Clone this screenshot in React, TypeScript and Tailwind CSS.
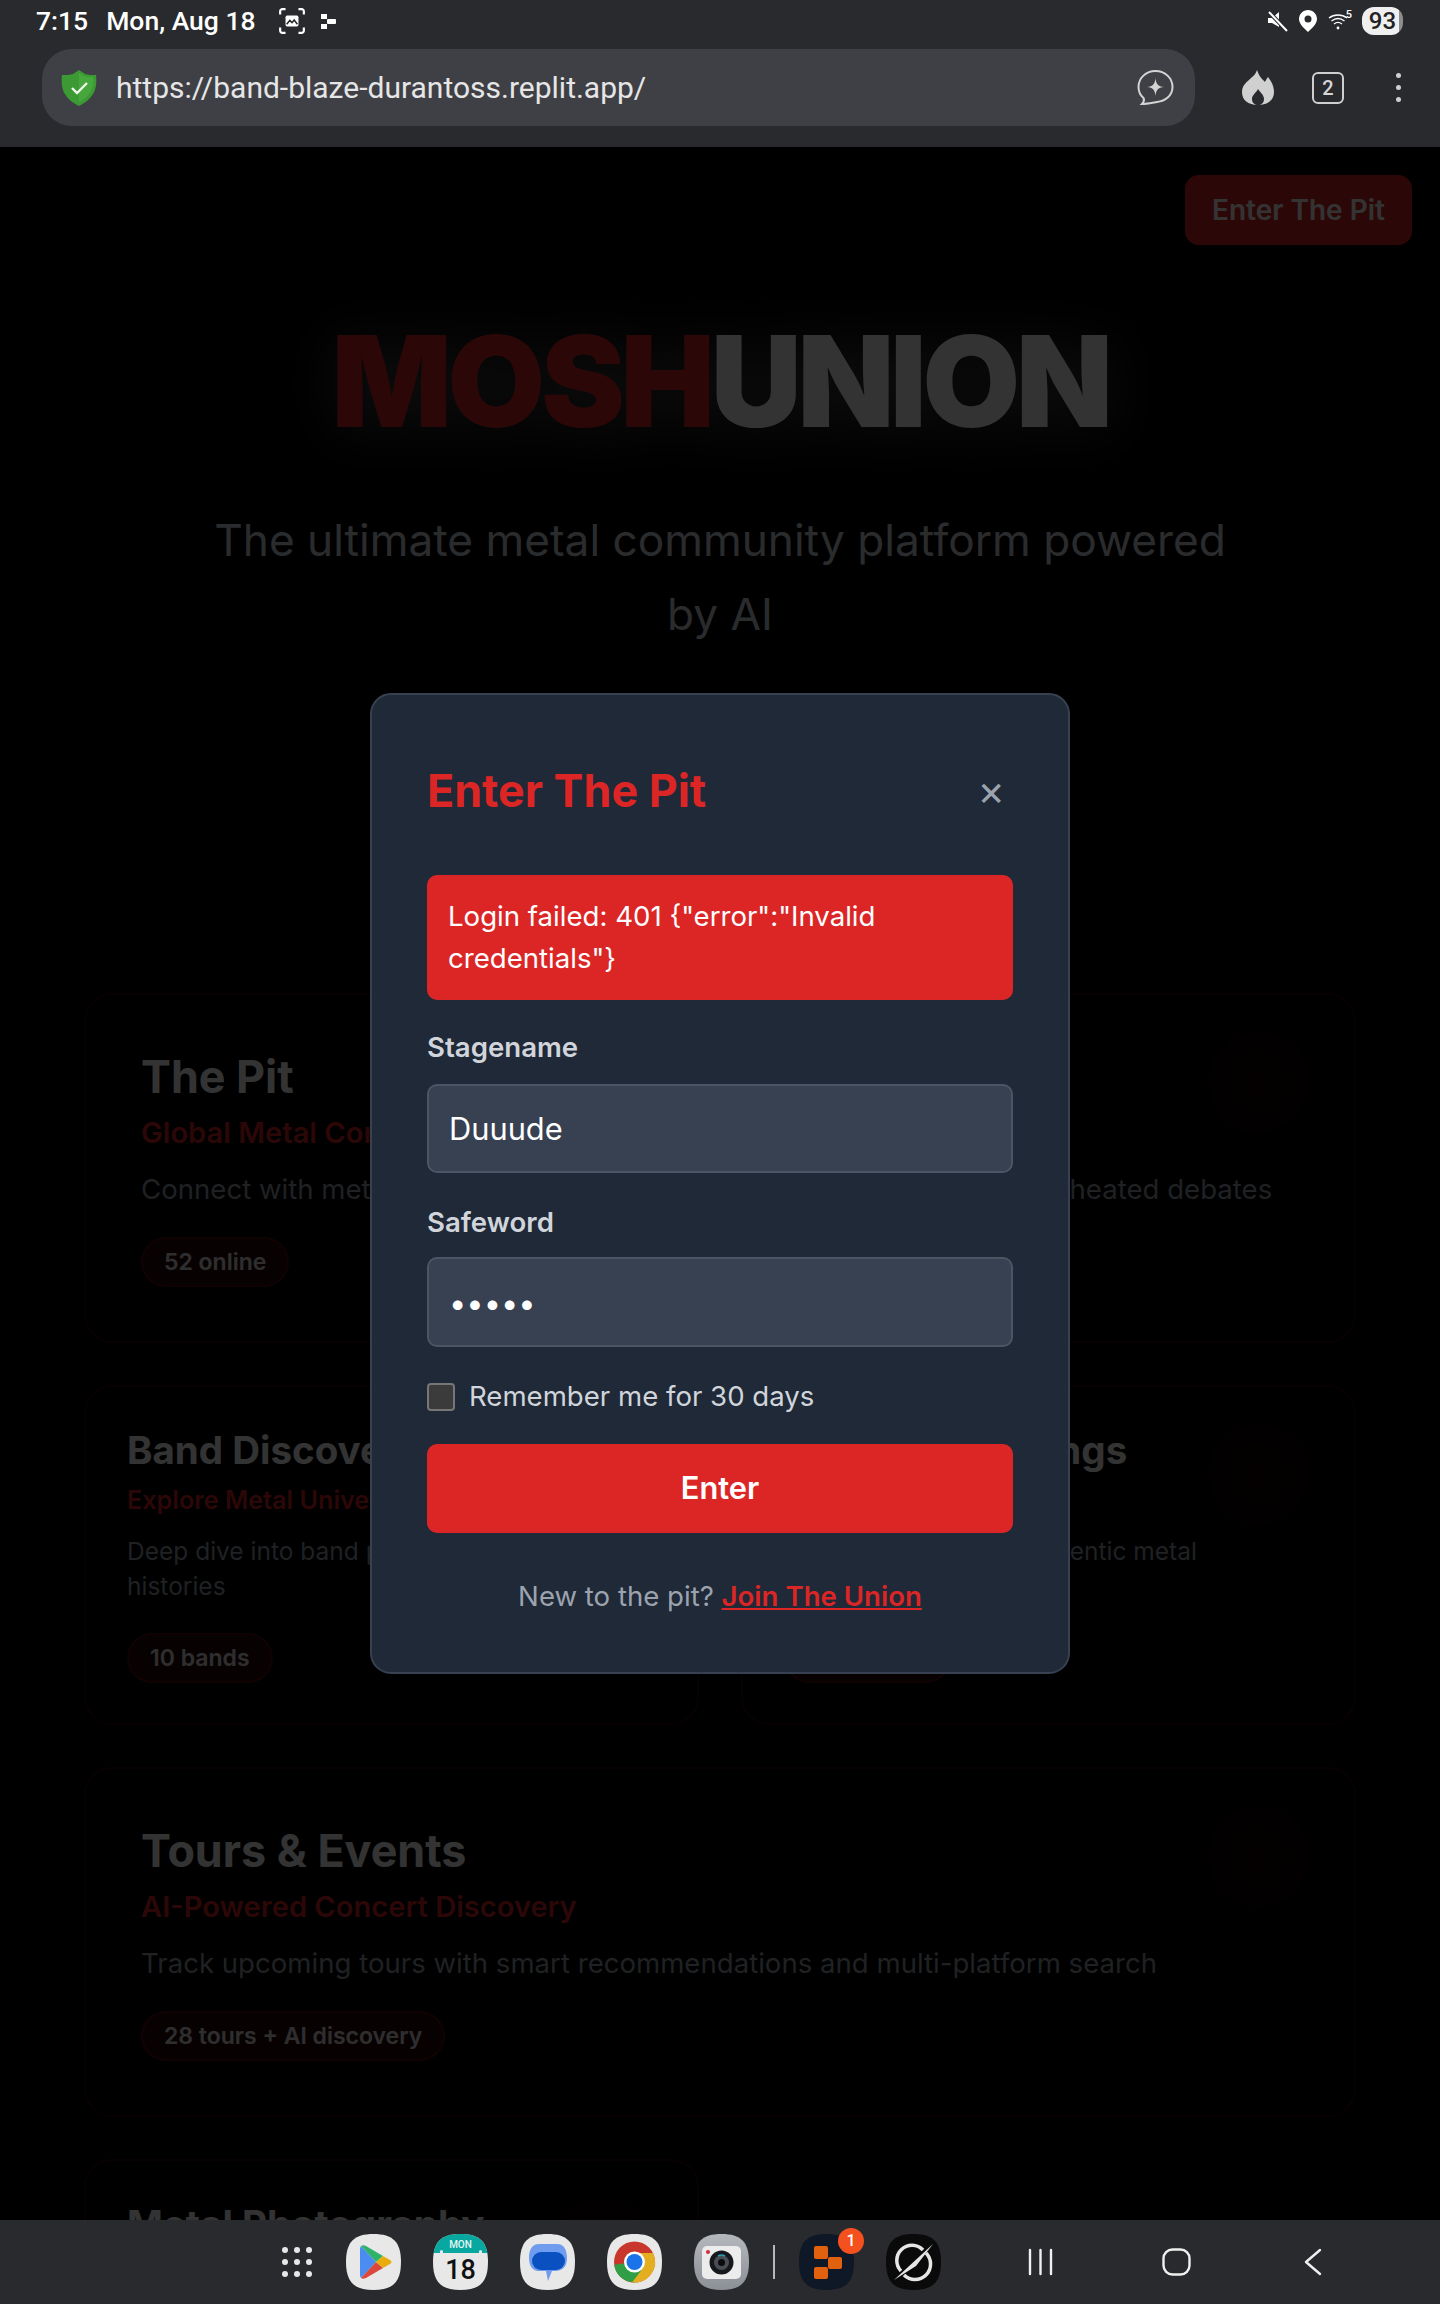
import { CSSProperties, ReactNode } from "react";

const inter = { fontFamily: "Inter, sans-serif" } as CSSProperties;

const SQUIRCLE = "M27.5 0C47 0 55 8 55 28C55 48 47 56 27.5 56C8 56 0 48 0 28C0 8 8 0 27.5 0Z";

function Squircle({ id, fill, children }: { id: string; fill: string; children?: ReactNode }) {
  return (
    <svg width="55" height="56" viewBox="0 0 55 56">
      <defs>
        <clipPath id={id}>
          <path d={SQUIRCLE} />
        </clipPath>
      </defs>
      <g clipPath={`url(#${id})`}>
        <rect width="55" height="56" fill={fill} />
        {children}
      </g>
    </svg>
  );
}

function PlayIcon() {
  return (
    <Squircle id="sq-play" fill="#e8e8e8">
      <path d="M15 12L30 28L15 44C14 43 14 41 14 40V16C14 15 14 13 15 12Z" fill="#4a8cf0" />
      <path d="M15 12C16 11 18 11 20 12L37 22L30 28Z" fill="#2fb36b" />
      <path d="M15 44C16 45 18 45 20 44L37 34L30 28Z" fill="#d9483b" />
      <path d="M37 22L44 26C46 27 46 29 44 30L37 34L30 28Z" fill="#e8ad0c" />
    </Squircle>
  );
}

function CalendarIcon() {
  return (
    <Squircle id="sq-cal" fill="#e8e8e8">
      <rect width="55" height="19" fill="#08a8a0" />
      <rect x="7" y="16" width="3" height="6" rx="1.5" fill="#e8e8e8" />
      <rect x="46" y="16" width="3" height="6" rx="1.5" fill="#e8e8e8" />
      <text x="27.5" y="14" textAnchor="middle" fontFamily="Roboto, sans-serif" fontSize="10" fontWeight="500" fill="#e6f6f5">MON</text>
      <text x="27.5" y="45" textAnchor="middle" fontFamily="Roboto, sans-serif" fontSize="27" fontWeight="500" fill="#111">18</text>
    </Squircle>
  );
}

function MessagesIcon() {
  return (
    <Squircle id="sq-msg" fill="#e8e8e8">
      <path d="M19 10H37C44 10 47 16 47 24C47 32 43 37 35 37H32L28 47L26 37H19C12 37 9 31 9 24C9 16 12 10 19 10Z" fill="#6f9cee" />
      <rect x="12" y="18" width="33" height="18" rx="9" fill="#0a50c0" />
    </Squircle>
  );
}

function ChromeIcon() {
  return (
    <Squircle id="sq-chrome" fill="#e8e8e8">
      <circle cx="27.5" cy="28" r="20.5" fill="#c9372c" />
      <path d="M27.5 28L7 28A20.5 20.5 0 0 0 25 48.4L36 34Z" fill="#2f9e44" transform="rotate(-8 27.5 28)" />
      <path d="M27.5 19H46A20.5 20.5 0 0 1 25 48.4L36 34Z" fill="#e3ae1f" />
      <circle cx="27.5" cy="28" r="10.5" fill="#fff" />
      <circle cx="27.5" cy="28" r="8" fill="#1a73e8" />
    </Squircle>
  );
}

function CameraIcon() {
  return (
    <svg width="55" height="56" viewBox="0 0 55 56">
      <defs>
        <linearGradient id="cam" x1="0" y1="0" x2="0" y2="1">
          <stop offset="0" stopColor="#b5b9bd" />
          <stop offset="1" stopColor="#8b8f96" />
        </linearGradient>
      </defs>
      <path d={SQUIRCLE} fill="url(#cam)" />
      <rect x="8" y="12" width="39" height="33" rx="5" fill="#ececec" />
      <circle cx="14" cy="18" r="2" fill="#d22f3a" />
      <circle cx="27.5" cy="28.5" r="12" fill="#17181b" />
      <circle cx="27.5" cy="28.5" r="7.5" fill="#4a4d55" />
      <circle cx="27.5" cy="28.5" r="3.5" fill="#0b0b0d" />
      <path d="M24 22A7 7 0 0 1 31 22" stroke="#2f9bb0" strokeWidth="1.6" fill="none" />
    </svg>
  );
}

function TasksIcon() {
  return (
    <div className="relative w-[55px] h-[56px]">
      <svg width="55" height="56" viewBox="0 0 55 56">
        <path d={SQUIRCLE} fill="#0f1826" />
        <rect x="15" y="12" width="14" height="13" rx="2" fill="#e2610f" />
        <rect x="29" y="23" width="14" height="12" rx="2" fill="#e2610f" />
        <rect x="15" y="33" width="14" height="12" rx="2" fill="#e2610f" />
      </svg>
      <span
        className="absolute -top-[6px] -right-[10px] flex items-center justify-center w-[26px] h-[26px] rounded-full bg-[#f4511e] text-white text-[16px] font-medium"
        style={{ fontFamily: "Roboto, sans-serif" }}
      >
        1
      </span>
    </div>
  );
}

function SwirlIcon() {
  return (
    <svg width="55" height="56" viewBox="0 0 55 56">
      <path d={SQUIRCLE} fill="#0a0a0a" />
      <path d="M15 37A15 15 0 0 1 37 16" stroke="#e6e6e6" strokeWidth="3.5" fill="none" />
      <path d="M40 19A15 15 0 0 1 18 41" stroke="#e6e6e6" strokeWidth="3.5" fill="none" />
      <path d="M8 46L47 10L30 32Z" fill="#e6e6e6" />
    </svg>
  );
}

function StatusBar() {
  return (
    <div className="h-[40px] flex items-center justify-between pl-[36px] pr-[37px] pt-[2px]" style={{ fontFamily: "Roboto, sans-serif" }}>
      <div className="flex items-center text-white text-[26.500px] font-medium">
        <span>7:15</span>
        <span className="ml-[18px]">Mon, Aug 18</span>
        <svg className="ml-[22px]" width="28" height="28" viewBox="0 0 26 26" fill="none" stroke="#fff" strokeWidth="2">
          <path d="M2 7V4C2 3 3 2 4 2H7M19 2H22C23 2 24 3 24 4V7M24 19V22C24 23 23 24 22 24H19M7 24H4C3 24 2 23 2 22V19" />
          <rect x="7" y="8" width="12" height="10" rx="1.500" fill="#fff" stroke="none" />
          <path d="M8 16L11 12.500L13 14.500L15 12L18 16" stroke="#292a2d" strokeWidth="1.400" />
        </svg>
        <svg className="ml-[15px]" width="16" height="18" viewBox="0 0 16 18" fill="#fff">
          <rect x="0" y="2" width="6" height="5" />
          <rect x="6" y="7" width="9" height="5" rx="1" />
          <rect x="0" y="12" width="6" height="5" />
        </svg>
      </div>
      <div className="flex items-center">
        <svg width="22" height="22" viewBox="0 0 22 22" fill="#fff">
          <path d="M1 8H5L12 2V17L5 13H1Z" />
          <path d="M2 2L20 21" stroke="#292a2d" strokeWidth="4" />
          <path d="M2 2L20 21" stroke="#fff" strokeWidth="2" />
        </svg>
        <svg className="ml-[10px]" width="18" height="22" viewBox="0 0 18 22">
          <path d="M9 0C4 0 0 4 0 9C0 14 5 18 9 22C13 18 18 14 18 9C18 4 14 0 9 0Z" fill="#fff" />
          <circle cx="9" cy="9" r="3.500" fill="#292a2d" />
        </svg>
        <div className="relative ml-[11px] w-[24px] h-[22px]">
          <svg width="20" height="18" viewBox="0 0 20 18" fill="none" stroke="#fff" strokeWidth="1.400" className="absolute left-0 top-[3px]">
            <path d="M1 5C6 1 14 1 19 5M3.500 8C7.500 5 12.500 5 16.500 8M6 11C8.500 9 11.500 9 14 11" />
            <circle cx="10" cy="15" r="1.400" fill="#fff" stroke="none" />
          </svg>
          <span className="absolute right-0 -top-[3px] text-white text-[11px] font-medium">5</span>
        </div>
        <div className="ml-[10px] w-[41px] h-[28px] rounded-[12px] bg-[linear-gradient(90deg,#efefef_90%,#8d8d8d_90%)] flex items-center justify-center text-[#222] text-[24px] font-medium leading-none">
          93
        </div>
      </div>
    </div>
  );
}

function Toolbar() {
  return (
    <div className="flex items-center pl-[42px] mt-[9px]" style={{ fontFamily: "Roboto, sans-serif" }}>
      <div className="w-[1153px] h-[77px] rounded-[30px] bg-[#3f4045] flex items-center pl-[19px] pr-[21px]">
        <svg width="36" height="36" viewBox="0 0 36 36">
          <path d="M18 0L24 4C27 5 31 5 35 5C36 15 36 27 18 36C0 27 0 15 1 5C5 5 9 5 12 4Z" fill="#3b9a34" />
          <path d="M18 3L23 6C26 7 29 7 32 7C33 15 32 25 18 32Z" fill="#46a83c" />
          <path d="M11 18L16 23L26 13" stroke="#eef7ec" strokeWidth="2.400" fill="none" />
        </svg>
        <span className="ml-[19px] text-[30px] leading-none text-[#e6e6e6]">https://band-blaze-durantoss.replit.app/</span>
        <svg className="ml-auto" width="37" height="37" viewBox="0 0 37 37" fill="none">
          <path d="M5 35C7 33 7.500 31 6.500 29C3 26 1.500 22 1.500 18C1.500 9 9 2 18.500 2C28 2 35.500 9 35.500 18C35.500 27 28 32 20 33C14 34 9 35 5 35Z" stroke="#d4d4d4" strokeWidth="2" />
          <path d="M18.500 9C19 15 21 17.500 27 18C21 18.500 19 21 18.500 27C18 21 16 18.500 10 18C16 17.500 18 15 18.500 9Z" fill="#d4d4d4" />
        </svg>
      </div>
      <svg className="ml-[47px]" width="32" height="35" viewBox="0 0 32 35">
        <path d="M15 0C17 6 20 9 23 12C24 10 25 8 26 7C30 12 32 17 32 22C32 30 26 35 16 35C6 35 0 30 0 22C0 15 5 12 9 8C12 6 14 3 15 0Z" fill="#d0d0d0" />
        <path d="M16 19C18 22 22 25 22 29C22 33 19 35 16 35C13 35 10 33 10 29C10 25 14 23 16 19Z" fill="#292a2d" />
      </svg>
      <div className="ml-[38px] w-[32px] h-[32px] rounded-[6px] border-[2px] border-[#cfcfcf] flex items-center justify-center text-[#d6d6d6] text-[20px] font-medium">
        2
      </div>
      <div className="ml-[52px] flex flex-col gap-[7px]">
        <span className="w-[5px] h-[5px] rounded-full bg-[#d0d0d0]" />
        <span className="w-[5px] h-[5px] rounded-full bg-[#d0d0d0]" />
        <span className="w-[5px] h-[5px] rounded-full bg-[#d0d0d0]" />
      </div>
    </div>
  );
}

function Glow({ className }: { className: string }) {
  return <div className={`absolute w-[175px] h-[175px] rounded-full bg-[radial-gradient(circle,rgba(220,38,38,0.1),transparent_70%)] ${className}`} />;
}

function WideCard({ title, sub, desc, badge }: { title: string; sub: string; desc: string; badge: string }) {
  return (
    <div className="relative col-span-2 h-[350px] rounded-[28px] border-[2px] border-[#dc2626]/20 pl-[55px] pt-[56px]">
      <Glow className="top-0 right-[8px]" />
      <h3 className="text-[44.800px] leading-[52px] font-bold text-white">{title}</h3>
      <p className="mt-[8px] text-[29.100px] leading-[44px] font-semibold text-[#dc2626]">{sub}</p>
      <p className="mt-[12px] text-[27.600px] leading-[44px] text-[#9ca3af]">{desc}</p>
      <span className="inline-block mt-[26px] h-[50px] rounded-full border-[2px] border-[#dc2626]/20 bg-[#dc2626]/20 px-[21px] text-[23px] leading-[46px] font-semibold text-[#e5e7eb]">{badge}</span>
    </div>
  );
}

function SmallCard({ title, sub, desc, badge }: { title: string; sub: string; desc: string; badge: string }) {
  return (
    <div className="relative h-[340px] rounded-[28px] border-[2px] border-[#dc2626]/20 pl-[41px] pt-[40px] overflow-hidden">
      <Glow className="top-0 right-[8px]" />
      <h3 className="text-[38.500px] leading-[46px] font-bold text-white whitespace-nowrap">{title}</h3>
      <p className="mt-[7px] text-[25.200px] leading-[40px] font-semibold text-[#dc2626]">{sub}</p>
      <p className="mt-[14px] text-[24.500px] leading-[35px] text-[#9ca3af]">{desc}</p>
      <span className="inline-block mt-[29px] h-[50px] rounded-full border-[2px] border-[#dc2626]/20 bg-[#dc2626]/20 px-[21px] text-[23px] leading-[46px] font-semibold text-[#e5e7eb]">{badge}</span>
    </div>
  );
}

function Page() {
  return (
    <div style={inter}>
      <div className="flex justify-end pt-[28px] pr-[28px]">
        <button className="w-[227px] h-[70px] rounded-[14px] bg-[#dc2626] text-white text-[28px] font-semibold">Enter The Pit</button>
      </div>
      <h1 className="mt-[73px] text-center text-[126px] leading-[126px] font-black tracking-[-4.300px] drop-shadow-[0_4px_30px_rgba(255,255,255,0.3)]">
        <span className="text-[#dc2626]">MOSH</span>
        <span className="text-white">UNION</span>
      </h1>
      <p className="mt-[59px] mx-auto w-[1060px] text-center text-[44.200px] leading-[74px] text-[#d1d5db]">
        The ultimate metal community platform powered by AI
      </p>
      <div className="mt-[342px] mx-[84px] grid grid-cols-2 gap-[42px]">
        <WideCard
          title="The Pit"
          sub="Global Metal Community"
          desc="Connect with metalheads worldwide through real-time chats, polls and heated debates"
          badge="52 online"
        />
        <SmallCard
          title="Band Discovery"
          sub="Explore Metal Universe"
          desc="Deep dive into band profiles, discographies and histories"
          badge="10 bands"
        />
        <SmallCard
          title="Reviews & Ratings"
          sub="Honest Reviews"
          desc="Review and discuss authentic metal recommendations"
          badge="25 reviews"
        />
        <WideCard
          title="Tours & Events"
          sub="AI-Powered Concert Discovery"
          desc="Track upcoming tours with smart recommendations and multi-platform search"
          badge="28 tours + AI discovery"
        />
        <SmallCard title="Metal Photography" sub="Concert Shots" desc="Browse live photos from the pit" badge="12 photos" />
      </div>
    </div>
  );
}

function LoginModal() {
  return (
    <div className="absolute inset-0 bg-black/80 flex items-center justify-center" style={inter}>
      <div className="w-[700px] h-[981px] rounded-[21px] border-[2px] border-[#374151] bg-[#1f2937] px-[55px] pt-[55px]">
        <div className="flex items-center justify-between h-[70px]">
          <h2 className="text-[44.800px] leading-[70px] font-bold text-[#dc2626] mt-[12px]">Enter The Pit</h2>
          <span className="mr-[8px] mt-[10px] text-[42px] leading-none text-[#9ca3af]">×</span>
        </div>
        <div className="mt-[55px] rounded-[10px] bg-[#dc2626] px-[21px] pt-[20px] pb-[21px] text-[27.600px] leading-[42px] text-white">
          Login failed: 401 {'{"error":"Invalid credentials"}'}
        </div>
        <label className="block mt-[30px] text-[27.600px] leading-[35px] font-semibold text-[#d1d5db]">Stagename</label>
        <input
          readOnly
          value="Duuude"
          className="block mt-[19px] w-full h-[89px] rounded-[10px] border-[2px] border-[#4b5563] bg-[#374151] px-[20px] text-[30.800px] text-white outline-none"
        />
        <label className="block mt-[32px] text-[27.600px] leading-[35px] font-semibold text-[#d1d5db]">Safeword</label>
        <input
          readOnly
          type="password"
          value="hello"
          className="block mt-[17px] w-full h-[90px] rounded-[10px] border-[2px] border-[#4b5563] bg-[#374151] px-[20px] text-[30.800px] text-white outline-none"
        />
        <div className="flex items-center mt-[36px] h-[28px]">
          <input type="checkbox" readOnly className="appearance-none w-[28px] h-[28px] rounded-[4px] border-[2px] border-[#767676] bg-[#3b3b3b]" />
          <span className="ml-[14px] text-[27.600px] leading-none text-[#d1d5db]">Remember me for 30 days</span>
        </div>
        <button className="mt-[33px] w-full h-[89px] rounded-[10px] bg-[#dc2626] text-white text-[30.800px] font-semibold">Enter</button>
        <p className="mt-[42px] text-center text-[27.600px] leading-[42px] text-[#9ca3af]">
          New to the pit? <a className="text-[#dc2626] font-semibold underline">Join The Union</a>
        </p>
      </div>
    </div>
  );
}

function DockBar() {
  return (
    <div className="h-[84px] bg-[#292a2d] flex items-center pl-[282px]">
      <div className="grid grid-cols-3 gap-[6px]">
        {Array.from({ length: 9 }).map((_, i) => (
          <span key={i} className="w-[6px] h-[6px] rounded-full bg-[#e8e8e8]" />
        ))}
      </div>
      <div className="ml-[34px] flex items-center gap-[32px]">
        <PlayIcon />
        <CalendarIcon />
        <MessagesIcon />
        <ChromeIcon />
        <CameraIcon />
      </div>
      <div className="ml-[24px] w-[2px] h-[34px] bg-[#b8b8b8]" />
      <div className="ml-[24px] flex items-center gap-[32px]">
        <TasksIcon />
        <SwirlIcon />
      </div>
      <svg className="ml-[87px]" width="25" height="28" viewBox="0 0 25 28" stroke="#f0f0f0" strokeWidth="2.400" strokeLinecap="round">
        <path d="M2 2V26M12.500 2V26M23 2V26" />
      </svg>
      <svg className="ml-[109px]" width="29" height="28" viewBox="0 0 29 28" fill="none" stroke="#f0f0f0" strokeWidth="2.400">
        <rect x="1.500" y="1.500" width="26" height="25" rx="9" />
      </svg>
      <svg className="ml-[113px]" width="18" height="28" viewBox="0 0 18 28" fill="none" stroke="#f0f0f0" strokeWidth="2.400" strokeLinecap="round" strokeLinejoin="round">
        <path d="M16 2L2 14L16 26" />
      </svg>
    </div>
  );
}

export default function App() {
  return (
    <div className="w-[1440px] h-[2304px] flex flex-col bg-black overflow-hidden">
      <div className="h-[147px] shrink-0 bg-[#292a2d]">
        <StatusBar />
        <Toolbar />
      </div>
      <main className="relative flex-1 overflow-hidden">
        <Page />
        <LoginModal />
      </main>
      <DockBar />
    </div>
  );
}
